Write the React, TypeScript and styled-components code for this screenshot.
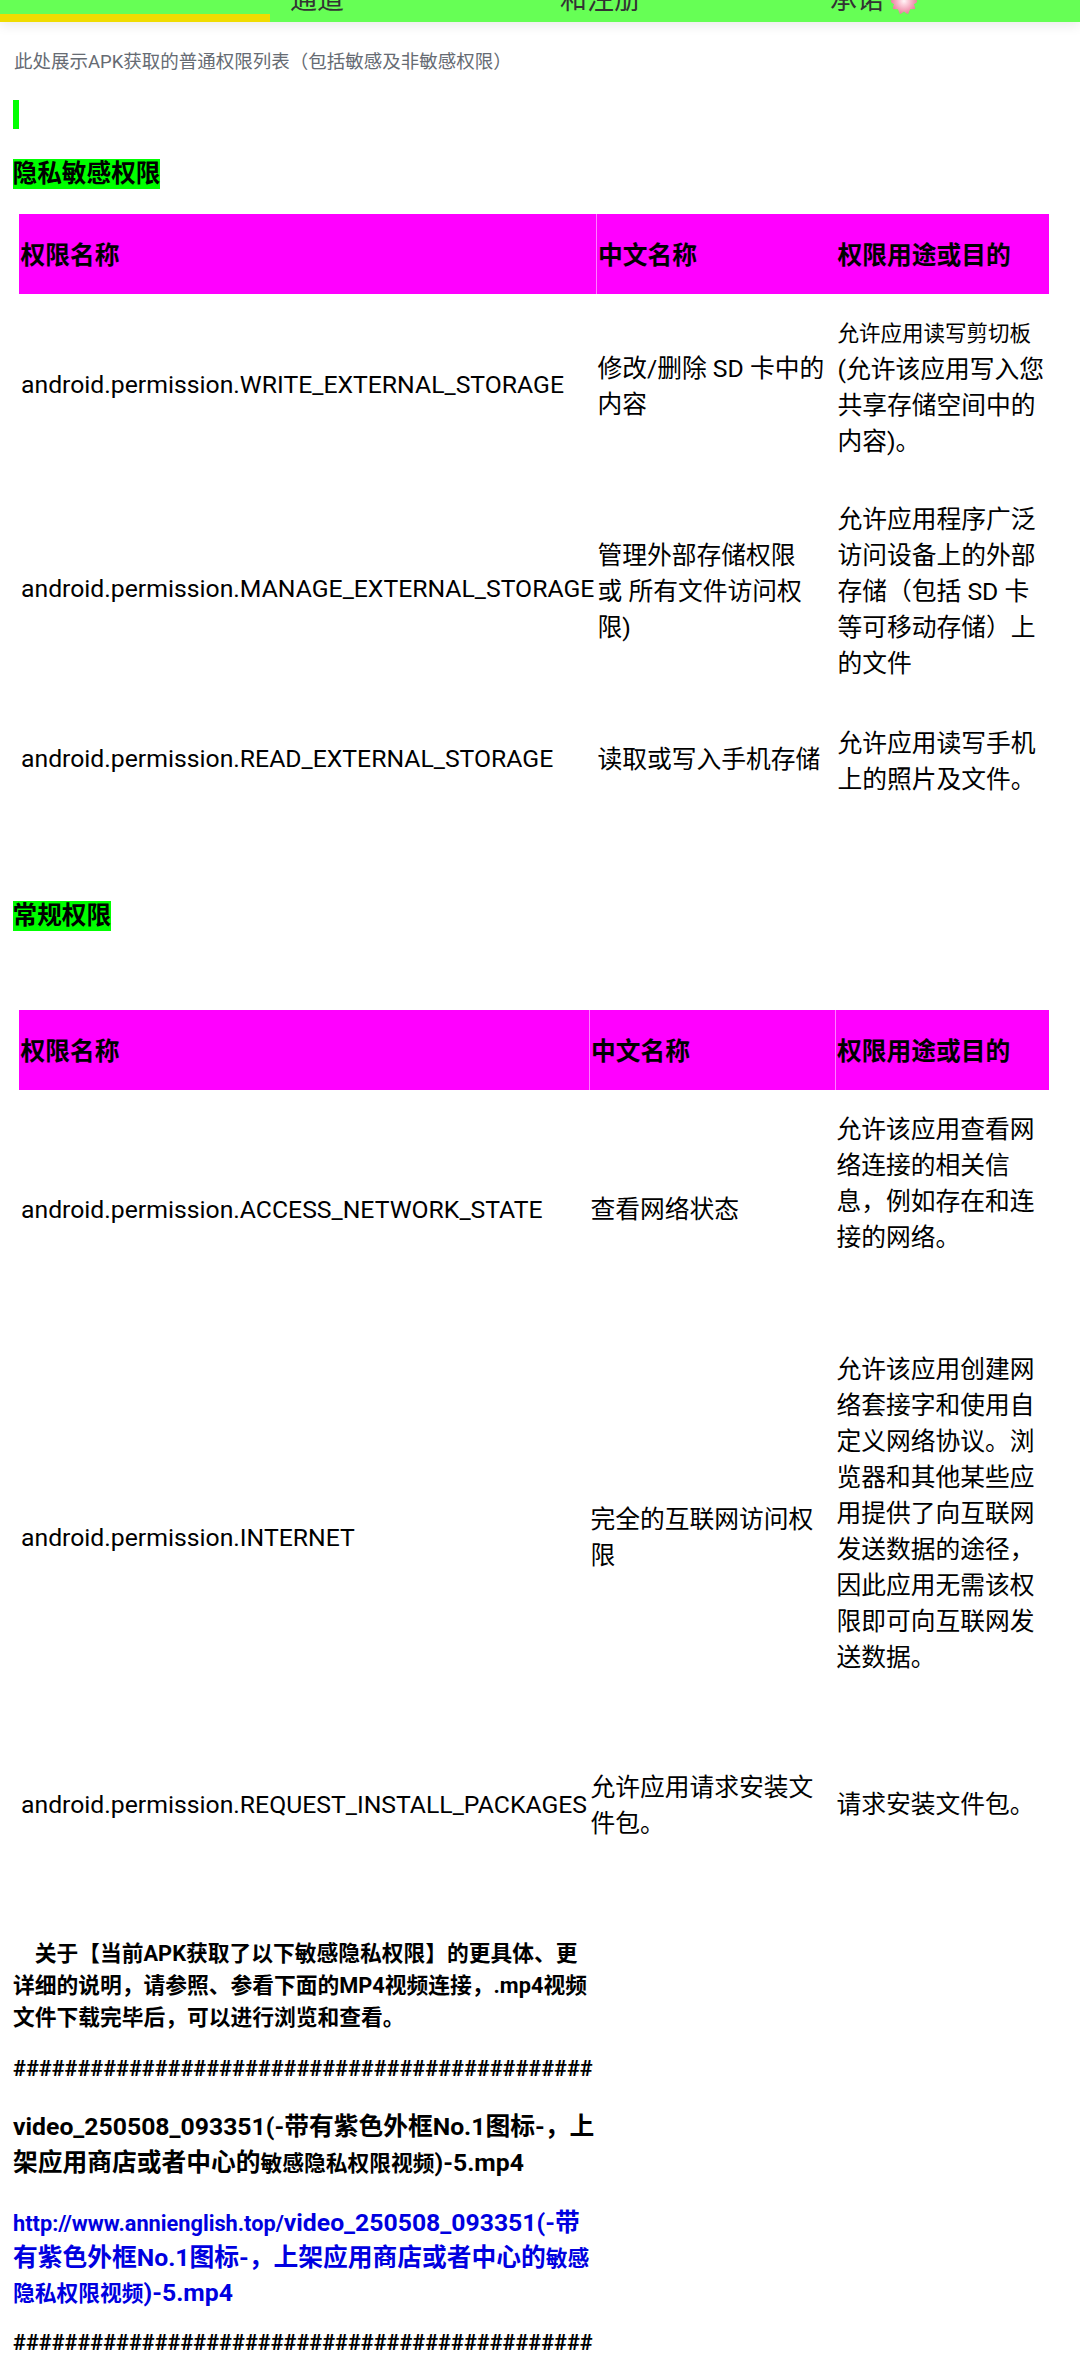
import styled, { createGlobalStyle } from "styled-components";

const GlobalStyle = createGlobalStyle`
  html, body {
    margin: 0;
    padding: 0;
    background: #fff;
    font-family: Roboto, "Noto Sans CJK SC", sans-serif;
    color: #000;
  }
`;

const Nav = styled.header`
  display: flex;
  align-items: flex-end;
  height: 22px;
  overflow: hidden;
  background: #66ff55;
  box-shadow: 0 4px 12px rgba(0, 0, 0, 0.08);
`;

const Tab = styled.div<{ $active?: boolean }>`
  flex: 0 0 270px;
  box-sizing: border-box;
  display: flex;
  align-items: center;
  gap: 7px;
  padding-left: 20px;
  font-size: 27px;
  line-height: 27px;
  color: #333;
  border-bottom: 8px solid ${(p) => (p.$active ? "#f0dc00" : "transparent")};
`;

const Main = styled.main`
  display: flow-root;
  padding-bottom: 16px;
`;

const Intro = styled.p`
  margin: 27px 0 0 14px;
  font-size: 18.5px;
  line-height: 26px;
  color: #666b73;
`;

const Marker = styled.div`
  width: 6px;
  height: 29px;
  margin: 25px 0 0 12.5px;
  background: #00ff00;
`;

const SectionTitle = styled.h2<{ $top: number }>`
  margin: ${(p) => p.$top}px 0 0 12.5px;
  width: fit-content;
  background: #00ff00;
  font-size: 24.67px;
  line-height: 30px;
  font-weight: 700;
`;

const Table = styled.table<{ $top: number }>`
  table-layout: fixed;
  border-collapse: collapse;
  width: 1030px;
  margin: ${(p) => p.$top}px 0 0 19px;
  font-size: 24.75px;
  line-height: 36px;
`;

const Col = styled.col<{ $w: number }>`
  width: ${(p) => p.$w}px;
`;

const HeadRow = styled.tr`
  height: 80px;
  background: #ff00ff;
`;

const HeadCell = styled.th<{ $divider?: boolean }>`
  padding: 4px 0 0 1.5px;
  text-align: left;
  font-weight: 700;
  border-left: ${(p) => (p.$divider ? "1px solid #ff7dff" : "0")};
  white-space: nowrap;
`;

const BodyRow = styled.tr<{ $h: number }>`
  height: ${(p) => p.$h}px;
`;

const Cell = styled.td<{ $nudge?: number; $lift?: number }>`
  padding: ${(p) => p.$nudge ?? 0}px 0 ${(p) => p.$lift ?? 0}px 1.5px;
  white-space: pre-line;
  vertical-align: middle;
`;

const NameCell = styled(Cell)`
  padding-left: 2px;
  white-space: nowrap;
`;

const Tiny = styled.span`
  font-size: 21.5px;
`;

const Notes = styled.section`
  margin: 74px 0 0 13px;
  width: 590px;
  font-weight: 700;
`;

const Lead = styled.p`
  margin: 0;
  font-size: 21.75px;
  line-height: 32px;
  white-space: pre-line;
`;

const Hashes = styled.p<{ $top: number }>`
  margin: ${(p) => p.$top}px 0 0;
  font-size: 21.75px;
  line-height: 32px;
  white-space: nowrap;
`;

const FileName = styled.p`
  margin: 24px 0 0;
  font-size: 24.75px;
  line-height: 36px;
  white-space: pre-line;
`;

const Small = styled.span`
  font-size: 21.75px;
`;

const FileLink = styled.a`
  display: block;
  margin-top: 24px;
  font-size: 24.75px;
  line-height: 34px;
  color: #0000e0;
  text-decoration: none;
  white-space: pre-line;
`;

const Sakura = () => (
  <svg width="26" height="26" viewBox="-12 -12 24 24">
    <defs>
      <radialGradient id="petal" cx="0" cy="0" r="12" gradientUnits="userSpaceOnUse">
        <stop offset="0" stopColor="#fff6f8" />
        <stop offset="0.3" stopColor="#fcd0dc" />
        <stop offset="1" stopColor="#ec7f9f" />
      </radialGradient>
    </defs>
    {[0, 72, 144, 216, 288].map((a) => (
      <path
        key={a}
        transform={`rotate(${a})`}
        d="M0 0C-6-2-7-8-4-12L0-9.5 4-12C7-8 6-2 0 0Z"
        fill="url(#petal)"
      />
    ))}
  </svg>
);

const hashes = "#".repeat(45);

const sensitive = [
  {
    h: 182,
    nudgeLabel: 4,
    nudge: 4,
    name: "android.permission.WRITE_EXTERNAL_STORAGE",
    label: "修改/删除 SD 卡中的\n内容",
    use: (
      <>
        <Tiny>允许应用读写剪切板</Tiny>
        {"\n(允许该应用写入您\n共享存储空间中的\n内容)。"}
      </>
    ),
  },
  {
    h: 226,
    nudgeLabel: 6,
    nudge: 6,
    name: "android.permission.MANAGE_EXTERNAL_STORAGE",
    label: "管理外部存储权限\n或 所有文件访问权\n限)",
    use: "允许应用程序广泛\n访问设备上的外部\n存储（包括 SD 卡\n等可移动存储）上\n的文件",
  },
  {
    h: 114,
    nudgeLabel: 2,
    nudge: 6,
    name: "android.permission.READ_EXTERNAL_STORAGE",
    label: "读取或写入手机存储",
    use: "允许应用读写手机\n上的照片及文件。",
  },
];

const normal = [
  {
    h: 240,
    lift: 52,
    name: "android.permission.ACCESS_NETWORK_STATE",
    label: "查看网络状态",
    use: "允许该应用查看网\n络连接的相关信\n息，例如存在和连\n接的网络。",
  },
  {
    h: 416,
    lift: 48,
    name: "android.permission.INTERNET",
    label: "完全的互联网访问权\n限",
    use: "允许该应用创建网\n络套接字和使用自\n定义网络协议。浏\n览器和其他某些应\n用提供了向互联网\n发送数据的途径，\n因此应用无需该权\n限即可向互联网发\n送数据。",
  },
  {
    h: 118,
    nudgeLabel: 2,
    name: "android.permission.REQUEST_INSTALL_PACKAGES",
    label: "允许应用请求安装文\n件包。",
    use: "请求安装文件包。",
  },
];

export default function App() {
  return (
    <>
      <GlobalStyle />
      <Nav>
        <Tab $active />
        <Tab>通道</Tab>
        <Tab>和注册</Tab>
        <Tab>
          承诺
          <Sakura />
        </Tab>
      </Nav>
      <Main>
        <Intro>此处展示APK获取的普通权限列表（包括敏感及非敏感权限）</Intro>
        <Marker />
        <SectionTitle $top={30}>隐私敏感权限</SectionTitle>
        <Table $top={25}>
          <colgroup>
            <Col $w={577} />
            <Col $w={240} />
            <Col $w={213} />
          </colgroup>
          <thead>
            <HeadRow>
              <HeadCell>权限名称</HeadCell>
              <HeadCell $divider>中文名称</HeadCell>
              <HeadCell>权限用途或目的</HeadCell>
            </HeadRow>
          </thead>
          <tbody>
            {sensitive.map((row) => (
              <BodyRow key={row.name} $h={row.h}>
                <NameCell>{row.name}</NameCell>
                <Cell $nudge={row.nudgeLabel}>{row.label}</Cell>
                <Cell $nudge={row.nudge}>{row.use}</Cell>
              </BodyRow>
            ))}
          </tbody>
        </Table>
        <SectionTitle $top={85}>常规权限</SectionTitle>
        <Table $top={79}>
          <colgroup>
            <Col $w={570} />
            <Col $w={246} />
            <Col $w={214} />
          </colgroup>
          <thead>
            <HeadRow>
              <HeadCell>权限名称</HeadCell>
              <HeadCell $divider>中文名称</HeadCell>
              <HeadCell $divider>权限用途或目的</HeadCell>
            </HeadRow>
          </thead>
          <tbody>
            {normal.map((row) => (
              <BodyRow key={row.name} $h={row.h}>
                <NameCell>{row.name}</NameCell>
                <Cell $nudge={row.nudgeLabel}>{row.label}</Cell>
                <Cell $lift={row.lift}>{row.use}</Cell>
              </BodyRow>
            ))}
          </tbody>
        </Table>
        <Notes>
          <Lead>
            {"　关于【当前APK获取了以下敏感隐私权限】的更具体、更\n详细的说明，请参照、参看下面的MP4视频连接，.mp4视频\n文件下载完毕后，可以进行浏览和查看。"}
          </Lead>
          <Hashes $top={19}>{hashes}</Hashes>
          <FileName>
            {"video_250508_093351(-带有紫色外框No.1图标-，上\n架应用商店或者中心的"}
            <Small>敏感隐私权限视频</Small>
            {")-5.mp4"}
          </FileName>
          <FileLink href="#">
            <Small>http://www.annienglish.top/</Small>
            {"video_250508_093351(-带\n有紫色外框No.1图标-，上架应用商店或者中心的"}
            <Small>{"敏感\n隐私权限视频"}</Small>
            {")-5.mp4"}
          </FileLink>
          <Hashes $top={16}>{hashes}</Hashes>
        </Notes>
      </Main>
    </>
  );
}
